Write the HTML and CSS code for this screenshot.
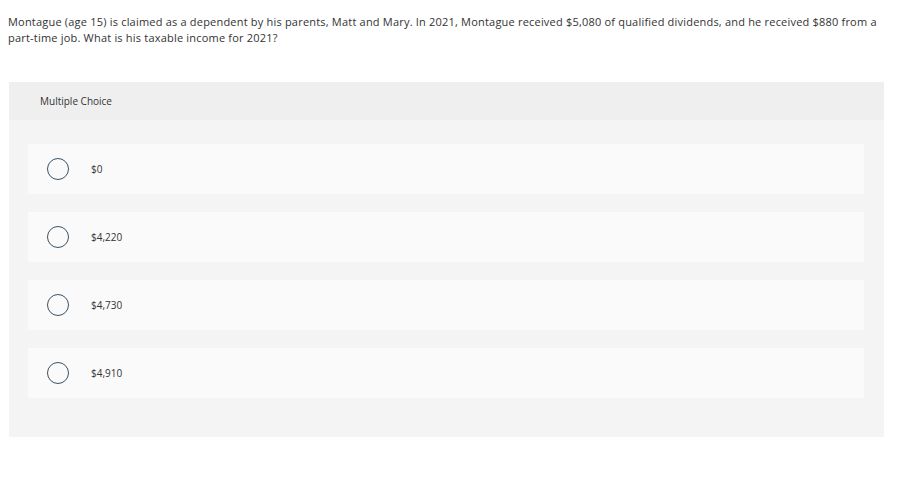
FILE: index.html
```html
<!DOCTYPE html>
<html>
<head>
<meta charset="utf-8">
<link rel="stylesheet" href="styles.css">
</head>
<body>
<p class="question">Montague (age 15) is claimed as a dependent by his parents, Matt and Mary. In 2021, Montague received $5,080 of qualified dividends, and he received $880 from a part-time job. What is his taxable income for 2021?</p>
<div class="panel">
  <div class="panel-head">Multiple Choice</div>
  <div class="panel-body">
    <div class="option"><span class="radio"></span><span class="label">$0</span></div>
    <div class="option"><span class="radio"></span><span class="label">$4,220</span></div>
    <div class="option"><span class="radio"></span><span class="label">$4,730</span></div>
    <div class="option"><span class="radio"></span><span class="label">$4,910</span></div>
  </div>
</div>
</body>
</html>
```
FILE: styles.css
```css
html, body { margin: 0; padding: 0; background: #fff; }
body {
  font-family: "Open Sans", "Liberation Sans", sans-serif;
  color: #333;
  letter-spacing: 0.2px;
}
.question {
  margin: 0;
  padding: 14px 0 0 8px;
  width: 878px;
  font-size: 11px;
  line-height: 16px;
}
.panel {
  margin: 36px 0 0 9px;
  width: 875px;
  background: #f4f4f4;
}
.panel-head {
  height: 38px;
  background: #efefef;
  padding-left: 31px;
  font-size: 10px;
  line-height: 38px;
  color: #333;
  letter-spacing: 0;
}
.panel-body {
  padding: 24px 20px 39px 19px;
  display: flex;
  flex-direction: column;
  gap: 18px;
}
.option {
  height: 50px;
  background: #fafafa;
  display: flex;
  align-items: center;
  padding-left: 19px;
}
.radio {
  width: 20px;
  height: 20px;
  border: 1.2px solid #3a5266;
  border-radius: 50%;
  box-sizing: content-box;
  flex: none;
}
.label {
  margin-left: 22px;
  font-size: 10px;
  color: #333;
  letter-spacing: 0;
}
```
